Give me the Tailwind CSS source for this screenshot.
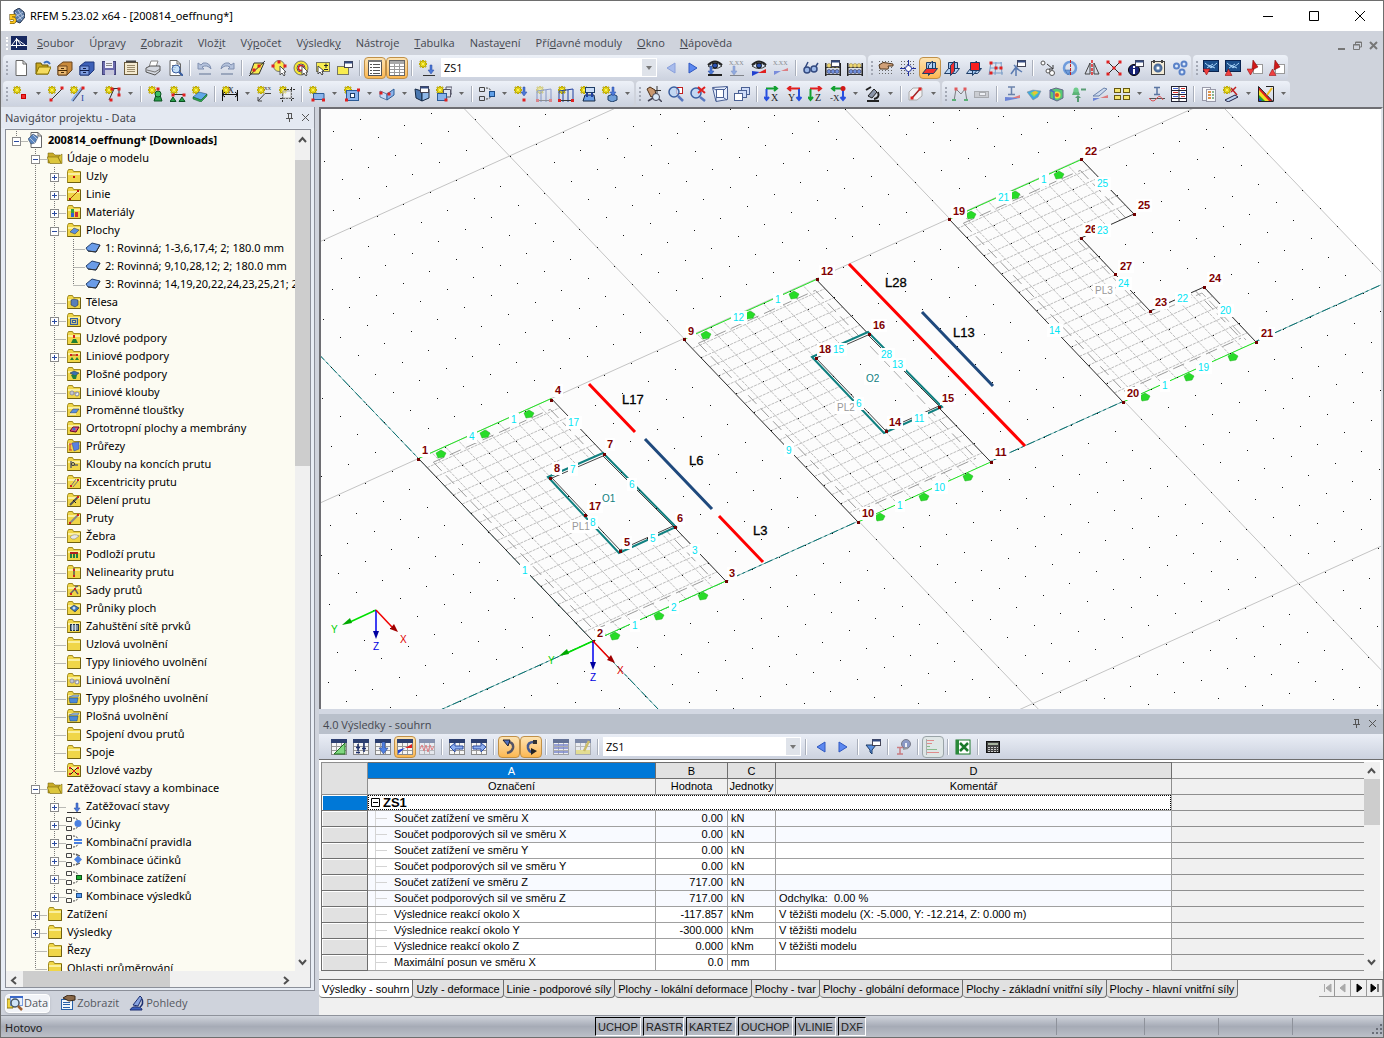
<!DOCTYPE html>
<html lang='cs'>

<head>
    <meta charset='UTF-8'>
    <meta name='viewport' content='width=device-width, initial-scale=1.0'>
    <title>RFEM 5.23.02 x64 - [200814_oeffnung*]</title>
    <script src='https://cdn.jsdelivr.net/npm/@tailwindcss/browser@4'></script>
</head>

<body class="h-screen overflow-hidden flex flex-col border border-[#6e6e6e] bg-[#cfd3dc] font-['Open_Sans','Noto_Sans',sans-serif] text-[11px] leading-4 text-black">

    <!-- title bar -->
    <header class='h-[30px] shrink-0 bg-white flex items-center pl-2'>
        <svg class='w-4 h-4 mr-[5px]' viewBox='0 0 16 16'>
            <path d='M5 3L10 0L15 4L16 9L11 15L6 13Z' fill='#5b7ba8' stroke='#26364f' />
            <path d='M6 4l7 8M9 2l5 7M6 9l8-5M8 12l7-5' stroke='#b7c8e0' />
            <path d='M6.500 7.500H2V10.500Q6 9.500 6 12.500Q6 15 1 14.500' fill='none' stroke='#5a4500' stroke-width='3' />
            <path d='M6.500 7.500H2V10.500Q6 9.500 6 12.500Q6 15 1 14.500' fill='none' stroke='#ffc820' stroke-width='2' />
        </svg>
        <h1 class="flex-1 font-['Noto_Sans','Open_Sans',sans-serif]">RFEM 5.23.02 x64 - [200814_oeffnung*]</h1>
        <div class='flex'>
            <button aria-label='Minimalizovat' class='w-[46px] h-[29px] grid place-items-center'><svg class='w-[10px] h-[10px]' viewBox='0 0 10 10'><path d='M0 5.500H10' stroke='#000' /></svg></button>
            <button aria-label='Maximalizovat' class='w-[46px] h-[29px] grid place-items-center'><svg class='w-[10px] h-[10px]' viewBox='0 0 10 10'><path d='M.5.5H9.500V9.500H.5Z' fill='none' stroke='#000' /></svg></button>
            <button aria-label='Zavřít' class='w-[46px] h-[29px] grid place-items-center'><svg class='w-[10px] h-[10px]' viewBox='0 0 10 10'><path d='M0 0L10 10M10 0L0 10' stroke='#000' /></svg></button>
        </div>
    </header>

    <!-- menu -->
    <nav class='h-6 shrink-0 flex items-center pl-[5px] text-[#44474f]'>
        <span class='h-[13px] border-l-2 border-dotted border-white mr-[3px]'></span>
        <svg class='w-4 h-[14px] mr-[10px]' viewBox='0 0 16 14'>
            <path d='M0 0H16V14H0Z' fill='#172860' />
            <path d='M0 9.500H16M5.500 2V12M5.500 3L1 9M5.500 3L14 9M5.500 3L10 9' stroke='#fff' fill='none' />
        </svg>
        <div id='menu' class='flex flex-1 gap-[15px]'></div>
        <div class='flex gap-[7px] pr-[5px] pt-1'>
            <svg class='w-[9px] h-[9px]' viewBox='0 0 9 9'><path d='M1 8H8' stroke='#777' stroke-width='2' /></svg>
            <svg class='w-[9px] h-[9px]' viewBox='0 0 9 9'><path d='M.5 3.500H6.500V8.500H.5ZM2.500 3V1H8.500V6H7M.5 4H6.500M3 1.500H8' stroke='#777' fill='none' /></svg>
            <svg class='w-[9px] h-[9px]' viewBox='0 0 9 9'><path d='M1 1L8 8M8 1L1 8' stroke='#777' stroke-width='2' /></svg>
        </div>
    </nav>

    <!-- toolbars -->
    <div id='bar1' class='h-[26px] shrink-0 flex pl-[2px] gap-[2px]'></div>
    <div id='bar2' class='h-[26px] shrink-0 flex pl-[2px] gap-[2px]'></div>

    <main class='flex-1 min-h-0 flex'>

        <!-- navigator -->
        <aside class='w-[314px] shrink-0 flex flex-col'>
            <section class='flex-1 min-h-0 flex flex-col bg-[#e8edf5] border-b border-r border-[#8b8f99]'>
                <div class='h-[21px] shrink-0 flex items-center pl-1 bg-[#e4e9f2] text-[#44474f]'>
                    <h2 class="flex-1 font-['Noto_Sans','Open_Sans',sans-serif]">Navigátor projektu - Data</h2>
                    <svg class='w-4 h-4' viewBox='0 0 16 16'><path d='M5 3.500H10M6.500 3V8M9.500 3V8M4 8.500H11M7.500 9V12' stroke='#555' fill='none' /></svg>
                    <svg class='w-4 h-4' viewBox='0 0 16 16'><path d='M4 4L11 11M11 4L4 11' stroke='#555' /></svg>
                </div>
                <div class='flex-1 min-h-0 flex flex-col mt-px ml-1 mr-[3px] mb-[2px] border border-[#8b8f99] bg-[#fcfbf2]'>
                    <div class='flex-1 min-h-0 flex'>
                        <div id='tree' class="flex-1 min-w-0 overflow-hidden pt-px font-['Noto_Sans','Open_Sans',sans-serif]"></div>
                        <div class='w-[15px] bg-[#f0f0f0] flex flex-col'>
                            <svg class='w-[15px] h-[30px] shrink-0' viewBox='0 0 15 30'><path d='M4 12L7.500 8L11 12' fill='none' stroke='#505050' stroke-width='2' /></svg>
                            <div class='h-[306px] bg-[#cdcdcd]'></div>
                            <span class='flex-1'></span>
                            <svg class='w-[15px] h-[17px] shrink-0' viewBox='0 0 15 17'><path d='M4 6L7.500 10L11 6' fill='none' stroke='#505050' stroke-width='2' /></svg>
                        </div>
                    </div>
                    <div class='h-4 shrink-0 bg-[#f0f0f0] flex'>
                        <svg class='w-[17px] h-4' viewBox='0 0 17 16'><path d='M10 6L6 9.500L10 13' fill='none' stroke='#505050' stroke-width='2' /></svg>
                        <div class='w-[147px] bg-[#cdcdcd]'></div>
                        <span class='flex-1'></span>
                        <svg class='w-[32px] h-4' viewBox='0 0 32 16'><path d='M6 6L10 9.500L6 13' fill='none' stroke='#505050' stroke-width='2' /></svg>
                    </div>
                </div>
            </section>
            <div class='h-6 shrink-0 flex items-center pl-1 gap-[10px] text-[#55585f]'>
                <button class='h-[19px] flex items-center gap-px px-px bg-[#f2f4f8] rounded border border-white shadow-sm' data-icon='navdata'>Data</button>
                <button class='flex items-center gap-px' data-icon='navshow'>Zobrazit</button>
                <button class='flex items-center gap-px' data-icon='navview'>Pohledy</button>
            </div>
        </aside>

        <div class='flex-1 min-w-0 flex flex-col pl-[4px]'>

            <!-- model view -->
            <div class='flex-1 min-h-0 border-t-2 border-l-2 border-[#6e6e73] border-r-2 border-r-[#dfe3ea] bg-[#fcfcfc]'>
                <svg id='model' class='block w-full h-full'></svg>
            </div>

            <!-- results -->
            <section class='shrink-0 h-[306px] flex flex-col border-t-[5px] border-[#d3d8e3] bg-[#f0f0f0]'>
                <div class='h-5 shrink-0 flex items-center pl-1 pr-[2px] bg-[#b9c0cb] text-[#44474f]'>
                    <h2 class='flex-1 pt-px'>4.0 Výsledky - souhrn</h2>
                    <svg class='w-4 h-4' viewBox='0 0 16 16'><path d='M5 3.500H10M6.500 3V8M9.500 3V8M4 8.500H11M7.500 9V12' stroke='#555' fill='none' /></svg>
                    <svg class='w-4 h-4' viewBox='0 0 16 16'><path d='M4 4L11 11M11 4L4 11' stroke='#555' /></svg>
                </div>
                <div id='bar3' class='h-[26px] shrink-0 flex items-center pl-[9px] bg-linear-to-b from-[#eaeef6] to-[#ccd2df] border-b border-[#6e6e6e]'></div>
                <div class='flex bg-white pt-[2px] pl-[2px] pr-[3px]'>
                    <table class='flex-1 table-fixed border-collapse w-full font-["Liberation_Sans",Arial,sans-serif]'>
                        <colgroup>
                            <col class='w-[46px]'><col class='w-[288px]'><col class='w-[72px]'><col class='w-[48px]'><col class='w-[396px]'><col>
                        </colgroup>
                        <thead id='thead'></thead>
                        <tbody id='rows'></tbody>
                    </table>
                    <div class='w-4 shrink-0 bg-[#f0f0f0] flex flex-col'>
                        <svg class='w-4 h-[17px]' viewBox='0 0 16 17'><path d='M4 11L7.500 7L11 11' fill='none' stroke='#505050' stroke-width='2' /></svg>
                        <div class='h-[46px] bg-[#cdcdcd]'></div>
                        <span class='flex-1'></span>
                        <svg class='w-4 h-[17px]' viewBox='0 0 16 17'><path d='M4 6L7.500 10L11 6' fill='none' stroke='#505050' stroke-width='2' /></svg>
                    </div>
                </div>
                <div class='mt-[8px] flex items-start border-t border-[#6e6e6e] font-["Liberation_Sans",Arial,sans-serif]'>
                    <div id='tabs' class='flex flex-1'></div>
                    <div id='pager' class='flex'></div>
                </div>
            </section>
        </div>
    </main>

    <!-- status bar -->
    <footer class='h-[22px] shrink-0 flex items-center pl-1 bg-linear-to-b from-[#d0d4dc] via-[#a6abb6] to-[#bcc0c8] border-t border-[#8e929b] text-[#222]'>
        <span class='w-[590px] pt-[2px] font-["Noto_Sans",sans-serif]'>Hotovo</span>
        <div id='modes' class='flex gap-[2px] font-["Liberation_Sans",Arial,sans-serif]'></div>
        <div class='flex-1 flex justify-end self-stretch py-[2px]'>
            <span class='w-[88px] border-l border-[#8e929b]'></span>
            <span class='w-[74px] border-l border-[#8e929b]'></span>
            <span class='w-[74px] border-l border-[#8e929b]'></span>
            <span class='w-[91px] border-l border-[#8e929b] flex justify-end items-end'>
                <svg class='w-3 h-3' viewBox='0 0 12 12'><path d='M9 1h2v2h-2zM5 5h2v2h-2zM9 5h2v2h-2zM1 9h2v2h-2zM5 9h2v2h-2zM9 9h2v2h-2z' fill='#6a6e78' /></svg>
            </span>
        </div>
    </footer>

    <script>
        const $ = id => document.getElementById(id)

        // ---------- icons (16 x 16) ----------
        const R = (x, y, w, h, f, s = 'none') => `<rect x="${x}" y="${y}" width="${w}" height="${h}" fill="${f}" stroke="${s}"/>`
        const P = (d, f = 'none', s = 'none', w = 1) => `<path d="${d}" fill="${f}" stroke="${s}" stroke-width="${w}"/>`
        const S = (d, s = '#333', w = 1) => P(d, 'none', s, w)
        const C = (x, y, r, f, s = 'none', w = 1) => `<circle cx="${x}" cy="${y}" r="${r}" fill="${f}" stroke="${s}" stroke-width="${w}"/>`
        const T = (x, y, t, f = '#222', n = 7) => `<text x="${x}" y="${y}" font-size="${n}" fill="${f}" font-family="Liberation Serif, serif">${t}</text>`
        const dash = (s, d) => s.replace('/>', ` stroke-dasharray="${d}"/>`)
        const dot = (x, y) => R(x - 1.5, y - 1.5, 3, 3, '#e02020')
        const star = S('M4 0V8M0 4H8M1 1L7 7M7 1L1 7', '#a89400', 2) + S('M4 .5V7.500M.5 4H7.500M1.500 1.500L6.500 6.500M6.500 1.500L1.500 6.500', '#fbec10', 1) + C(4, 4, 1.500, '#fdf250')
        const cursor = P('M9 6V15L11 13L13 16L14 15L13 12H15Z', '#fff', '#555')
        const win = (x, y) => R(x, y, 8, 6, '#fff', '#445') + R(x, y, 8, 2, '#334a80')
        const down = (x, y) => P(`M${x} ${y}h2v5h2l-3 4l-3-4h2z`, '#4a78d8', '#2a4aa0', .5)
        const eye = S('M1 5Q8 -2 15 5', '#222', 2) + P('M1 6Q8 0 15 6Q8 11 1 6', '#dce8f8', '#333') + C(8, 5.500, 2.500, '#2a50b0', '#111')
        const mesh = dash(S('M1 1.500H16M1 4.500H16M1 7.500H16M1 10.500H16M1 13.500H16', '#666'), '1 2')
        const table = R(.5, .5, 15, 15, '#f5f5f5', '#8a8a8a') + R(0, 0, 16, 4, '#2c3f70') + S('M1 7.500H15M1 11.500H15M5.500 4V15M10.500 4V15', '#999')
        const combo = S('M.5 1.500H5.500V5.500H.5ZM.5 10.500H5.500V14.500H.5Z', '#444') + dash(S('M7 2Q11 2 12 5M7 13Q11 13 12 10', '#444'), '2 1')
        const abacus = R(0, 3, 1.500, 13, '#222') + R(14.500, 3, 1.500, 13, '#222') + S('M1 7.500H15M1 14.500H15') + C(4, 5.500, 2, '#f0d870', '#887740', .5) + C(8, 5.500, 2, '#f0d870', '#887740', .5) + C(12, 5.500, 2, '#f0d870', '#887740', .5) + C(4, 11.500, 2, '#7090e0', '#224', .5) + C(8, 11.500, 2, '#7090e0', '#224', .5) + C(12, 11.500, 2, '#7090e0', '#224', .5)
        const square = f => P('M4.500 2.500H13.500V10.500H4.500Z', f, '#1d3c66')
        const flat = f => P('M.5 13.500L4.500 8.500H15.500L11.500 13.500Z', f, '#1d3c66')
        const upright = f => P('M6.500 5.500L10.500 1V11L6.500 15.500Z', f, '#1d3c66')
        const sheet = P('M3 .5H10L13.500 4V15.500H3Z', '#fff', '#666') + S('M10 .5V4H13.500', '#666')
        const screen = R(.5, .5, 15, 11, '#1c508c', '#0a2450') + S('M2 3L8 8L14 3M5 5L12 8M4 8L10 4', '#a8d4f8')
        const folder = P('M1.500 3.500L2.500 1.500H6.500L7.500 3.500H14.500V14.500H1.500Z', '#f0d648', '#a08a20') + P('M2 5H14V7H2Z', '#faf0a0') + S('M1.500 14.500H14.500V4', '#6f6010')
        const frame = S('M1 16V5L15 3V16M5 5V16M10 4V16', '#2040a0') + S('M0 14.500H16') + dot(1.500, 14.500) + dot(14.500, 14.500)
        const axes = (a, b, t, x, y) => S(a, '#12a030', 2) + S(b, '#2850e0', 2) + T(x, y, t, '#222', 10)
        const icons = {
            new: sheet,
            open: P('M1 14V3H6L7 5H13V14Z', '#c9a820', '#6b5600') + P('M1 14L4 7H16L13 14Z', '#f5dc60', '#8b7600') + S('M9 3Q12 0 15 4', '#3c70c0', 2),
            drawerA: P('M1 6L6 2H15V10L10 15H1Z', '#c98a3c', '#6a441c') + P('M1 6H10V15H1Z', '#eab870', '#6a441c') + S('M1 10.500H10M4 8.500H7M4 12.500H7', '#4a2c08'),
            drawerB: P('M1 6L6 2H15V10L10 15H1Z', '#3c60b8', '#20387c') + P('M1 6H10V15H1Z', '#7f9ee0', '#20387c') + S('M1 10.500H10M4 8.500H7M4 12.500H7', '#101c48'),
            save: R(1.500, 1.500, 13, 13, '#6a6aac', '#44447c') + R(4, 1, 8, 7, '#f0f0f8') + R(4, 10, 9, 5, '#c8c8dc') + S('M5 3.500H11M5 5.500H11', '#888'),
            clip: R(1.500, 2.500, 13, 12, '#f4ead0', '#6a5a3a') + S('M4 5.500H12M4 7.500H12M4 9.500H12M4 11.500H12', '#9a8a6a') + S('M3 1.500H13', '#444', 2),
            print: P('M4 7L6 1H13L11 7', '#fff', '#888') + P('M1 8L5 6H15V11L10 15L1 12Z', '#d4d8e0', '#555') + S('M2 10L10 12L15 9', '#777'),
            preview: sheet + S('M5 5.500H11M5 7.500H9M5 9.500H8', '#777') + C(9, 9, 4, '#b8d8f8cc', '#3a5ea0') + S('M12 12L16 16', '#3a5ea0', 2),
            undo: P('M1 3V9H7L5 7Q10 4 14 9Q13 2 6 3L4 5Z', '#b4c2dc', '#8090b0') + S('M2 14H14', '#9aa6bc', 2),
            redo: P('M15 3V9H9L11 7Q6 4 2 9Q3 2 10 3L12 5Z', '#b4c2dc', '#8090b0') + S('M2 14H14', '#9aa6bc', 2),
            selq: P('M1 14L5 3H15L10 14Z', '#f8ec50', '#333') + S('M0 16L16 1', '#333') + dot(5, 10) + dot(10, 6),
            sele: C(8, 6, 5.500, '#f8ec50', '#777') + dot(8, 2) + dot(2, 6) + dot(14, 6) + cursor,
            ring: C(8, 8, 7, '#f8e830', '#776') + C(8, 8, 4, '#fff', '#555', 1) + C(8, 8, 2.500, 'none', '#d02020', 1.500) + cursor,
            selw: R(1.500, 2.500, 13, 9, '#f8ec50', '#776') + S('M9 5.500H13M11 3.500V8M9 9.500H13', '#222') + P('M3 6V14L5 12L7 15L8 14L7 11H9Z', '#fff', '#444'),
            wins: R(.5, 6.500, 11, 8, '#f8ec50', '#776') + win(7.500, 1.500),
            navi: R(1.500, .5, 13, 15, '#fff', '#555') + S('M3 4.500H5M6 4.500H13M3 7.500H5M6 7.500H13M3 10.500H5M6 10.500H13M3 13.500H5M6 13.500H13', '#555') + R(1, 0, 14, 2, '#777'),
            tabl: R(.5, .5, 15, 15, '#fff', '#666') + R(1, 1, 14, 3, '#a8a8a8') + S('M1 6.500H15M1 9.500H15M1 12.500H15M5.500 4V15M10.500 4V15', '#999'),
            load: star + down(11, 5) + S('M4 15.500H16'),
            left: P('M12 3V13L4 8Z', '#a8bcec', '#8aa0dc'),
            right: P('M4 3V13L12 8Z', '#5c88f0', '#3058c0'),
            left2: P('M12 3V13L4 8Z', '#5c88f0', '#3058c0'),
            eyeload: eye + down(3, 6) + S('M1 15H15', '#222', 2),
            xxload: '<g opacity=".5">' + T(0, 5, 'X.XX', '#222', 6) + down(4, 6) + S('M1 15.500H15') + '</g>',
            eyeres: eye + P('M1 16V11L9 12Z', '#2040d0') + P('M7 13L15 9V13Z', '#e02020'),
            xxres: '<g opacity=".5">' + T(0, 5, 'X.XX', '#222', 6) + P('M1 15V11L8 11Z', '#2040d0') + P('M8 11L15 8V11Z', '#e02020') + '</g>',
            glasses: C(4, 10, 3, '#9cb8e8', '#334a80', 1.500) + C(11, 9, 3, '#9cb8e8', '#334a80', 1.500) + S('M2 8L5 2M13 6L15 3', '#334a80', 1.500),
            abwin: abacus + win(6.500, .5),
            abacus,
            hand: mesh + P('M1 5Q5 1 9 3L15 4V6H10Q12 10 7 9L2 9Z', '#d0a078', '#503820'),
            snap: mesh + S('M8.500 0V16M0 8.500H16', '#2030a0') + C(8.500, 8.500, 3, '#fff', '#2030a0'),
            plxy: square('#9cc4f0') + upright('#b8d4f4') + flat('#f03030'),
            plyz: square('#9cc4f0') + flat('#b8d4f4') + upright('#f03030'),
            plxz: flat('#b8d4f4') + upright('#9cc4f0') + square('#f82020'),
            gridp: S('M3 2L1 15M8 2L7 15M13 2L14 15M3 3H14M2 8H14M1 13H15', '#7a9ec8') + dot(3, 3) + dot(8, 8) + dot(13, 8) + dot(3, 13),
            uaxes: S('M6 16V7L1 14M6 8L12 12M4 5L8 9', '#5a7ab0', 1.500) + win(7.500, .5),
            copy: C(3, 3, 2, '#fff', '#555') + C(12, 13, 2.500, '#fff', '#555') + C(8, 11, 2, '#fff', '#555') + S('M7 4L13 9M13 5V9H9', '#333'),
            rotate: C(8, 8, 6, 'none', '#6f9cdc', 2.500) + P('M3 10L9 10L6 15Z', '#6f9cdc', '#34609c', .5) + dash(S('M8.500 0V16', '#c02020'), '3 1'),
            mirror: S('M6 3V14H1ZM10 3V14H15Z', '#444') + dash(S('M8 0V16', '#e02020', 1.500), '3 1'),
            cross: S('M2 2L14 14M14 2L2 14', '#222') + dot(2, 2) + dot(14, 2) + dot(2, 14) + dot(14, 14) + dot(8, 8),
            info: C(6, 10, 5.500, '#182478', '#000') + R(5, 9, 2, 5, '#fff') + R(5, 6, 2, 2, '#fff') + win(7.500, .5),
            clipgear: R(1.500, 1.500, 13, 13, '#f4ecd8', '#444') + C(8, 8, 3.500, '#7090b8', '#4a6a98', 2) + C(8, 8, 1.500, '#fff') + S('M4 0V3M12 0V3', '#444', 2),
            gears: C(4.500, 6, 2.500, '#e0ecfc', '#5a82c8', 2) + C(12, 4, 2.500, '#e0ecfc', '#5a82c8', 2) + C(10, 12, 2.500, '#e0ecfc', '#5a82c8', 2),
            scr1: screen + P('M0 9H7L3.500 15Z', '#f04040', '#800', .5),
            scr2: screen + P('M0 15.500H7L3.500 9Z', '#f04040', '#800', .5),
            red1: R(6.500, 4.500, 9, 9, '#fff', '#999') + P('M6 0L11 7L5 10Z', '#d01818', '#700', .5) + P('M0 9H7L3.500 15Z', '#f04040', '#800', .5),
            red2: R(6.500, 4.500, 9, 9, '#fff', '#999') + P('M6 0L11 7L5 10Z', '#d01818', '#700', .5) + P('M0 15.500H7L3.500 9Z', '#f04040', '#800', .5),
            // second row
            node: star + R(8.500, 8.500, 4, 4, '#f03030', '#c00'),
            line: star + S('M3 14L14 3') + dot(3, 14) + dot(14, 2),
            member: star + S('M2 15L12 2', '#8ab0e8', 3) + S('M3 15L13 2', '#445') + dot(13, 2) + T(11, 15, 'I', '#2040a0', 9),
            poly: star + S('M7 2.500H14V9M9 3L4 14', '#333') + dot(7, 3) + dot(14, 3) + dot(14, 9) + dot(6, 14),
            sup: star + P('M6 15L8 9H12L14 15Z', '#28a048', '#0a5020') + C(10, 8, 3, '#3cc060', '#0a5020') + dot(10, 3),
            sups: star + S('M4 8.500H15') + dot(3, 9) + dot(14, 9) + P('M0 15.500L3 11L6 15.500ZM9 15.500L12 11L15 15.500Z', '#28a048', '#0a5020'),
            supa: star + P('M1 11L7 6L15 8L9 14Z', '#60a8e8', '#1d3c66', .5) + P('M1 11L9 14L15 8V10L9 16L1 13Z', '#30a850', '#0a5020', .5),
            dim: star + S('M0 8.500H16M.5 4V15M15.500 4V15M3 6L0 8.500L3 11M13 6L16 8.500L13 11', '#111') + T(6, 7, 'X', '#111', 8),
            note: star + T(7, 4, 'XX', '#333', 5) + S('M14 7.500H8L1 15M1 11V15H5', '#444'),
            guides: star + dash(S('M3.500 8V16M12.500 1V16M1 12.500H16M5 3.500H16', '#333'), '2 1') + R(4, 5, 8, 7, '#fff8', '#aaa'),
            surf: star + P('M4.500 7.500H15V13.500H4.500Z', '#8ab4ec', '#2d5c96') + dot(4, 14) + dot(14.500, 14),
            opening: star + R(2.500, 4.500, 12, 10, '#8ab4ec', '#2d5c96') + R(6.500, 7.500, 4, 4, '#fff', '#1d3c66') + dot(2.500, 14) + dot(14.500, 4),
            intersect: P('M1 5L8 8V14L1 11Z', '#c8dcf8', '#5d7ca6') + P('M8 8L15 3V9L8 14Z', '#8ab4ec', '#2d5c96') + dot(2, 7) + dot(10, 8),
            solid: P('M1 3L8 5V15L2 12Z', '#4a78b0', '#142844') + P('M8 5L15 3V12L8 15Z', '#8fb8e8', '#142844') + win(6.500, .5),
            solids: star + R(1.500, 7.500, 9, 7, '#8ab4ec', '#2d5c96') + S('M7.500 7V3.500H14.500V11H11M10 3V1H16V8H15', '#556') + dot(10, 14),
            comb: combo + R(10.500, 5.500, 5, 5, '#60a0e8', '#1d4c86'),
            nload: star + down(9, 1) + dot(10, 14),
            mload0: '<g opacity=".45">' + star + frame + '</g>',
            mload: star + frame,
            aload: star + R(5.500, 1.500, 9, 5, '#c8dcf8', '#1d3c66') + P('M3 15L5 9H14L15 15Z', '#6ca0e8', '#142844') + S('M7 7V11M12 7V11', '#2040a0', 2),
            bload: star + P('M6 10L11 8L15 10V14L10 16L6 14Z', '#6f9ed8', '#1d3c66') + down(10, 1),
            pan: S('M11 0V9M7 4.500H15', '#333') + P('M1 3L4 1L9 4L10 9L5 11Z', '#c89870', '#4a3018') + C(10, 11, 3.500, '#d8e8f8', '#445') + S('M13 13L16 16M2 15L7 12', '#445', 1.500),
            zoomw: R(8.500, 1.500, 6, 6, '#fff', '#c02020') + C(6, 6, 5, '#bcd4f4cc', '#3a5ea0', 1.500) + S('M10 10L15 15', '#5878c0', 2.500),
            zoomx: C(6, 7, 5, '#bcd4f4cc', '#3a5ea0', 1.500) + S('M10 11L15 15', '#5878c0', 2.500) + S('M8 1L15 7M15 1L8 7', '#e02020', 2),
            cubew: P('M.5 1.500L15.500 .5V13.500L4 15.500Z', '#e4ecfc', '#4a6094') + R(4.500, 3.500, 7, 8, '#fff', '#4a6094') + S('M1 2L4 4M15 1L12 4M4 15L4 12M15 14L12 12', '#4a6094'),
            cubes: R(7.500, 1.500, 8, 7, '#cfdcf8', '#4a6094') + R(4.500, 4.500, 8, 7, '#cfdcf8', '#4a6094') + R(.5, 7.500, 8, 7, '#fff', '#4a6094'),
            vx: axes('M2 2.500H13M10 0L13 2.500L10 5', 'M2.500 3V14M0 11L2.500 14L5 11', 'X', 7, 15),
            vy: S('M14 2.500H2M5 0L2 2.500L5 5', '#e02020', 2) + S('M13 3V14M10.500 11L13 14L15.500 11', '#2850e0', 2) + T(2, 15, 'Y', '#222', 10),
            vz: S('M2 2.500H13M10 0L13 2.500L10 5', '#e02020', 2) + S('M2.500 3V14M0 11L2.500 14L5 11', '#12a030', 2) + T(7, 15, 'Z', '#222', 10),
            vmx: S('M12 2.500H2M5 0L2 2.500L5 5', '#12a030', 2) + S('M13 3V14M10.500 11L13 14L15.500 11', '#2850e0', 2) + C(13, 2.500, 2.500, '#d01818') + T(0, 15, '-X', '#222', 9),
            micro: P('M3 10L9 3L12 6L7 12Z', '#8a94a8', '#222') + S('M2 15H14M9 13Q15 12 13 6M1 4L6 1', '#222', 2),
            section: P('M1 6L5 2H14V10L9 14H1Z', '#f2f2f4', '#aaa') + S('M4 12L12 3', '#a02020', 1.500) + dot(12, 3) + dot(4, 12),
            portal: '<g opacity=".7">' + S('M2 15L4 3L9 8L13 3L15 15', '#555') + dot(4, 3) + dot(13, 3) + P('M0 15h4v-2h-4zM12 15h4v-2h-4z', '#28a048') + '</g>',
            tag: '<g opacity=".5">' + R(.5, 5.500, 14, 6, '#bbb', '#777') + R(5.500, 6.500, 6, 3, '#fff', '#777') + '</g>',
            resI: '<g opacity=".7">' + S('M4 1H11M7.500 1V8M4 8.500H11', '#3a5a90', 1.500) + P('M1 15V11L16 12Z', '#4060d0') + P('M8 12L16 9V12Z', '#e05050') + '</g>',
            iso: P('M1 6L7 4L15 5L12 11L7 14Z', '#40a8e0', '#888', .5) + P('M4 7L9 5L13 6L8 11Z', '#80e060') + P('M6 6L10 5L12 7L8 9Z', '#f0c030'),
            isocube: P('M2 4L8 2L15 4V12L9 15L2 12Z', '#58c878', '#668') + C(9, 9, 3.500, '#f0e040') + C(9, 9, 2, '#e05030') + S('M2 4L6 6V14', '#4070c0', 1.500),
            supres: '<g opacity=".7">' + P('M2 9L4 4H8L10 9Z', '#28a048') + C(6, 4, 2.500, '#3cc060') + S('M16 3.500H11M8 11V16', '#208040', 2) + P('M5 12L8 9L11 12Z', '#208040') + '</g>',
            defl: '<g opacity=".7">' + P('M1 10L12 2L15 3L7 10Z', '#c8d8f0', '#3a5a90') + P('M1 15V12H8Z', '#4060d0') + P('M8 12L16 9V12Z', '#e05050') + '</g>',
            boxes: R(.5, 2.500, 6, 4, '#f4e670', '#665810') + R(9.500, 2.500, 6, 4, '#f4e670', '#665810') + R(.5, 9.500, 6, 4, '#f4e670', '#665810') + R(9.500, 9.500, 6, 4, '#f4e670', '#665810'),
            curve: '<g opacity=".8">' + S('M5 1.500H11M8 1V8M5 8.500H11', '#3a5a90', 1.500) + S('M0 12.500H16', '#333') + S('M0 12Q4 18 8 12Q11 8 14 14', '#e03030') + '</g>',
            tables: R(.5, .5, 15, 15, '#fff', '#223') + S('M1 4.500H15M1 8.500H15M1 12.500H15M8 1V15', '#223', 1) + S('M2 2.500H7M10 6.500H14M2 10.500H7', '#4060d0') + S('M10 2.500H14M2 6.500H7M10 10.500H14', '#e03030'),
            report: '<g opacity=".8">' + R(1.500, 1.500, 8, 13, '#fff', '#889') + R(5.500, 3.500, 9, 12, '#fff', '#889') + S('M7 6H10M7 9H10M7 12H10', '#e08020', 2) + S('M11 6H13M11 9H13M11 12H13', '#4a9050', 1.500) + '</g>',
            pens: star + S('M8 2L14 9M13 1L8 6', '#c02020', 1.500) + P('M2 14L12 9L15 11L5 16Z', '#b8d0f0', '#224'),
            palette: P('M.5 .5V15.500H15Z', '#e02020', '#222') + P('M1 4V15H11Z', '#f4e020') + P('M1 9V15H7Z', '#20a030') + P('M1 12V15H4Z', '#2040d0') + S('M9 9L14 2', '#f0c020', 2) + S('M8 .5H15.500V15.500', '#222', 1),
            // results toolbar
            t1: table + P('M3 15H14V4Z', '#80d880', '#207020'),
            t2: table + S('M5 5V12M3 8.500H7M11 4V13M9 9.500H13M3 13.500H7', '#1c2f6c', 1.500),
            t3: table + P('M7 3h3v6h3l-4.500 6l-4.500-6h3z', '#5080e0', '#203a80', .5),
            t4: table + P('M1 15V11L8 9Z', '#2040d0') + P('M8 9L15 5V9Z', '#e02020'),
            t5: '<g opacity=".5">' + table + S('M1 10L3 6L5 12L7 6L9 13L11 6L13 11L15 7', '#e02020') + '</g>',
            t6: table + P('M1 8L6 4V7H14V10H6V13Z', '#90b0f0', '#2a4aa0'),
            t7: table + P('M15 8L10 4V7H2V10H10V13Z', '#90b0f0', '#2a4aa0'),
            c1: S('M6 3Q13 3 12 9Q11 13 6 14', '#556', 2.500) + P('M2 1L9 1L7 7Z', '#5070c0', '#223'),
            c2: S('M11 3Q4 3 5 9Q6 13 9 13', '#445a90', 2.500) + P('M8 16L14 12L8 9Z', '#222') + R(10, 1, 4, 4, '#333'),
            t8: '<g opacity=".7">' + table + S('M1 6H15M1 9H15M1 13H15', '#5060c0', 1.500) + '</g>',
            t9: '<g opacity=".55">' + table + R(1, 11, 14, 4, '#f0e050') + S('M14 2L9 12', '#c0a000', 2.500) + '</g>',
            filter: P('M1 6H11L7 11V15L5 13V11Z', '#5a90e0', '#1d3c66') + win(7.500, .5),
            infoi: '<g opacity=".5">' + C(11, 5, 4.500, '#3a52a0', '#112') + R(10, 4, 2, 4, '#fff') + S('M2 8.500H8M5 8V15M2 15H8', '#c02020', 1.500) + S('M8 10L13 9', '#555', 2) + '</g>',
            bars: '<g opacity=".6">' + S('M1.500 0V16', '#888') + S('M2 1.500H9M2 4.500H7', '#e05050') + S('M2 7.500H5M2 10.500H12', '#50a050') + S('M2 13.500H14', '#e05050') + '</g>',
            xls: R(1, 1, 14, 14, '#fff', '#1a7a2a') + R(1, 1, 3, 14, '#2a8a3a') + S('M5 4L13 12M13 4L5 12', '#1a7a2a', 2.500),
            calc: R(1.500, 2.500, 13, 11, '#444', '#111') + R(3, 4, 10, 2, '#a8b4a0') + dash(S('M3 8.500H13M3 10.500H13M3 12.500H13', '#ccc'), '2 1'),
            navdata: P('M0 4H6V13H0Z', '#f0d648', '#8a7410') + R(3.500, 1.500, 12, 9, '#e8f0fc', '#7aa0e0') + R(3, 1, 13, 2, '#3a68c8') + C(8, 8, 4, '#d0e4f8', '#456', 1.500) + S('M11 11L15 15', '#a06030', 2.500),
            navshow: R(1.500, 4.500, 11, 10, '#f0f6fc', '#2860a8') + S('M3 7.500H10M3 9.500H10M3 12.500H10', '#2860a8') + P('M3 3L8 0L15 1V5L9 6Z', '#8a6848', '#3a2818'),
            navview: P('M4 10L11 1L13 3L9 11Z', '#88a4e0', '#1d2f70') + P('M1 15Q3 11 8 12Q13 12 13 15Z', '#3c60c0', '#1d2f70') + S('M13 4Q15 9 11 12', '#1d2f70', 1.500),
            // tree
            doc: sheet + P('M0 7L5 2L10 5L7 11L3 12Z', '#5b86c0', '#26364f', .5) + S('M2 6L7 11M5 3L9 7', '#b7c8e0'),
            opened: P('M1 13V3H6L8 5H13V13Z', '#c8ac28', '#6b5600', .5) + P('M3 13.500L0 7H11L15 4V13.500Z', '#dcc63c', '#6b5600', .5) + S('M11 7L14 13', '#8b7610'),
            folder,
            quad: P('M1 8L7 3L15 5L11 12L3 11Z', '#6a9ce8', '#24406c') + S('M3 11L11 12L15 5', '#333'),
            lc: S('M1 14.500H15', '#333', 1) + down(10, 5),
            k1: combo + C(12, 7.500, 3.500, '#4a80e0'),
            k2: combo + S('M8 6H16M8 9H16', '#4a80e0', 2),
            k3: combo + P('M12 3.500L16 7.500L12 11.500L8 7.500Z', '#4a80e0') + S('M10 2L14 4M10 13L14 11', '#444'),
            k4: combo + R(10.500, 5.500, 5, 4, '#20b030', '#0a5018'),
            k5: combo + R(10.500, 5.500, 5, 4, '#5a9cf0', '#1d4c86'),
        }
        // folders carrying a small badge
        const badges = {
            uzly: R(7, 8, 2, 2, '#c01010'),
            linie: S('M4 13L12 5', '#a05000') + R(11, 4, 2, 2, '#c01010') + R(3, 12, 2, 2, '#c01010'),
            mat: R(5, 5, 3, 4, '#30a040') + R(5, 9, 3, 4, '#3060d0') + R(9, 8, 3, 5, '#d03030'),
            ploch: P('M4 10L8 6L13 8L9 12Z', '#5a90e0', '#334', .5),
            teles: P('M5 6L8 5L12 6V11L9 13L5 11Z', '#5a80b8', '#223', .5),
            otvor: R(4.500, 6.500, 7, 6, '#c8c080', '#34609c') + R(6.500, 8.500, 3, 2, '#f0e890', '#34609c'),
            uzpod: P('M5 13L7 9H10L12 13Z', '#208030') + R(7, 5, 2, 3, '#d02020'),
            lipod: S('M4 7H12', '#a03000') + R(4, 6, 2, 2, '#d02020') + R(10, 6, 2, 2, '#d02020') + P('M4 12L6 9L8 12ZM9 12L11 9L13 12Z', '#208030'),
            plpod: P('M4 7L8 5L13 7L9 10Z', '#3870b0', '#223', .5) + P('M5 9H11L10 13H7Z', '#208040'),
            klou: C(6, 9, 2, '#e8eef8', '#889') + C(11, 10, 2, '#e8eef8', '#889') + S('M5 9H11', '#99a'),
            tl: P('M4 11L7 7H13L10 11Z', '#5a90e0', '#334', .5) + S('M4 12H10', '#fff'),
            orto: P('M4 11L7 7L13 7L10 12Z', '#e05080', '#603') + C(8, 9, 1.500, '#3870d0'),
            prurez: P('M6 5L13 4V11L8 13Z', '#5a80e0', '#2a4090', .5) + S('M4 6V12M3 6H6M3 12H6', '#d03030'),
            kon: S('M5 5V12M5 9H12', '#666', 1.500) + C(7, 8, 1.500, '#f0e890', '#333'),
            exc: S('M5 12L10 5M7 13L12 7', '#777') + R(11, 5, 2, 2, '#d02020') + R(4, 11, 2, 2, '#d02020'),
            del: S('M4 13L12 5', '#555', 2) + S('M7 8L10 11', '#222') + R(11, 4, 2, 2, '#d02020'),
            prut: S('M4 13L12 5', '#888', 2) + R(11, 4, 2, 2, '#d02020') + R(3, 12, 2, 2, '#d02020'),
            zebra: P('M4 9Q8 5 13 8L9 11H6Z', '#e8e8e8', '#777', .5),
            podl: S('M4 7H12', '#b02020', 2) + S('M5 8V12M8 8V12M11 8V12', '#208040', 2),
            neli: S('M8 4V13', '#555', 1.500) + R(7, 5, 2, 2, '#d02020') + R(7, 11, 2, 2, '#d02020'),
            sady: S('M4 12L9 7L12 12M9 5L12 4', '#666', 1.500) + R(8, 6, 2, 2, '#d02020') + R(4, 11, 2, 2, '#d02020'),
            prun: P('M4 8L8 5L13 8L9 12Z', '#3a70b8', '#123', .5) + C(8, 8, 1.500, '#c8e0f8'),
            zah: R(4.500, 6.500, 8, 6, '#8090a0', '#234') + S('M6.500 6V13M9.500 6V13', '#cde'),
            typ: P('M3 7L8 5H13L12 7Z', '#9cc4f0', '#456', .5) + P('M3 8L12 8L11 13H4Z', '#4a88d8', '#246', .5),
            vaz: S('M4 5L12 13M12 5L4 13', '#222') + R(3, 5, 2, 2, '#e02020') + R(11, 5, 2, 2, '#e02020') + R(3, 11, 2, 2, '#e02020') + R(11, 11, 2, 2, '#e02020') + R(7, 8, 2, 2, '#e02020'),
        }
        for (const b in badges) icons[b] = folder + badges[b]
        const icon = n => `<svg class="w-4 h-4 shrink-0" viewBox="0 0 16 16">${icons[n]}</svg>`

        document.querySelectorAll('[data-icon]').forEach(b => b.insertAdjacentHTML('afterbegin', icon(b.dataset.icon)))

        // ---------- menu ----------
        $('menu').innerHTML = '_Soubor Úpr_avy _Zobrazit Vlož_it Vý_počet Výsledk_y Nástro_je _Tabulka Nasta_vení Pří_davné~moduly _Okno _Nápověda'
            .split(' ').map(m => `<a href="#">${m.replace('~', ' ').replace(/_(.)/, '<u>$1</u>')}</a>`).join('')

        // ---------- toolbars: "|" separator, "v" drop arrow, "*" pressed, "[]" load case ----------
        const select = w => `<span class="relative flex ${w}"><select aria-label="Zatěžovací stav" class="appearance-none w-full h-[19px] bg-white pl-[3px] outline-none"><option>ZS1</option></select>
            <span class="absolute right-px top-px w-[14px] h-[17px] bg-[#dfe3ea] grid place-items-center pointer-events-none"><svg class="w-[6px] h-1" viewBox="0 0 6 4"><path d="M0 0H6L3 4Z" fill="#777"/></svg></span></span>`
        const tool = t => {
            if (t == '|') return '<span class="w-2 h-4 flex justify-center"><i class="w-px bg-[#a9afbb]"></i><i class="w-px bg-white"></i></span>'
            if (t == 'v') return '<button aria-label="Více" class="w-[13px] h-5 grid place-items-center"><svg class="w-[5px] h-[3px]" viewBox="0 0 5 3"><path d="M0 0H5L2.500 3Z" fill="#666"/></svg></button>'
            if (t == '[]') return select('w-[216px] mx-[3px]')
            if (t == '[s]') return select('w-[198px] mx-px')
            if (t[0] == '*') return `<button aria-label="${t.slice(1)}" class="w-[22px] h-[22px] grid place-items-center border border-[#c09048] rounded-sm bg-linear-to-b from-[#fde3b0] to-[#fcb850]">${icon(t.slice(1))}</button>`
            if (t[0] == '+') return `<button aria-label="${t.slice(1)}" class="w-[22px] h-[22px] grid place-items-center border border-[#9aa4a8] rounded-sm bg-[#dfe6e6]">${icon(t.slice(1))}</button>`
            return `<button aria-label="${t}" class="w-[22px] h-[22px] grid place-items-center">${icon(t)}</button>`
        }
        const tools = s => s.split(' ').map(tool).join('')
        const group = s => `<div class="flex items-center pl-[3px] h-[25px] rounded-sm bg-linear-to-b from-[#edf1f8] to-[#ccd2df]"><i class="h-[14px] mr-[2px] border-l-2 border-dotted border-[#a4a9b5]"></i>${tools(s)}</div>`

        $('bar1').innerHTML = [
            'new open drawerA drawerB save clip print preview | undo redo | selq sele ring selw wins | *navi *tabl | load [] left right eyeload xxload eyeres xxres | glasses abwin abacus',
            'hand snap *plxy plyz plxz gridp uaxes | copy rotate mirror cross info clipgear gears',
            'scr1 scr2 red1 red2'].map(group).join('')
        $('bar2').innerHTML = [
            'node v line member v poly v | sup sups supa | dim v note guides | surf v opening v intersect v solid solids v | comb v nload mload0 mload aload bload v',
            'pan zoomw zoomx cubew cubes | vx vy vz vmx v micro v | section v',
            'portal tag | resI iso isocube supres defl boxes v curve tables | report pens v palette v'].map(group).join('')
        $('bar3').innerHTML = tools('t1 t2 t3 *t4 t5 | t6 t7 | *c1 *c2 | t8 t9 | [s] | left2 right | filter | infoi | +bars | xls | calc')

        // ---------- tree: level, expander, icon, text ----------
        const nodes = `0-doc 200814_oeffnung* [Downloads]
1-opened Údaje o modelu
2+uzly Uzly
2+linie Linie
2+mat Materiály
2-ploch Plochy
3.quad 1: Rovinná; 1-3,6,17,4; 2; 180.0 mm
3.quad 2: Rovinná; 9,10,28,12; 2; 180.0 mm
3.quad 3: Rovinná; 14,19,20,22,24,23,25,21; 2
2.teles Tělesa
2+otvor Otvory
2.uzpod Uzlové podpory
2+lipod Liniové podpory
2.plpod Plošné podpory
2.klou Liniové klouby
2.tl Proměnné tloušťky
2.orto Ortotropní plochy a membrány
2.prurez Průřezy
2.kon Klouby na koncích prutu
2.exc Excentricity prutu
2.del Dělení prutu
2.prut Pruty
2.zebra Žebra
2.podl Podloží prutu
2.neli Nelinearity prutu
2.sady Sady prutů
2.prun Průniky ploch
2.zah Zahuštění sítě prvků
2.folder Uzlová uvolnění
2.folder Typy liniového uvolnění
2.klou Liniová uvolnění
2.typ Typy plošného uvolnění
2.typ Plošná uvolnění
2.folder Spojení dvou prutů
2.folder Spoje
2.vaz Uzlové vazby
1-opened Zatěžovací stavy a kombinace
2+lc Zatěžovací stavy
2+k1 Účinky
2+k2 Kombinační pravidla
2+k3 Kombinace účinků
2+k4 Kombinace zatížení
2+k5 Kombinace výsledků
1+folder Zatížení
1+folder Výsledky
1.folder Řezy
1.folder Oblasti průměrování`.split('\n').map(l => {
            const [, lv, ex, ic, tx] = l.match(/^(\d)(.)(\w+) (.*)/)
            return { lv: +lv, ex, ic, tx }
        })
        $('tree').innerHTML = nodes.map((n, i) => {
            const cx = l => 10.5 + 19 * l
            const more = l => { // does a later sibling exist on this level
                for (let k = i + 1; k < nodes.length; k++) { if (nodes[k].lv == l) return true; if (nodes[k].lv < l) return false }
                return false
            }
            let d = ''
            for (let l = 1; l < n.lv; l++) if (more(l)) d += `M${cx(l)} 0V18`
            d += `M${cx(n.lv)} 0V${more(n.lv) ? 18 : 9}M${cx(n.lv)} 10.500H${cx(n.lv) + 12}`
            const box = n.ex == '.' ? '' : `<rect x="${cx(n.lv) - 4}" y="6.500" width="8" height="8" fill="#fff" stroke="#8a8a8a"/><path d="M${cx(n.lv) - 2.500} 10.500h5${n.ex == '+' ? 'm-2.500 -2.500v5' : ''}" stroke="#2a4aa0"/>`
            const w = 22 + 19 * n.lv
            return `<div class="flex items-center h-[18px] whitespace-nowrap"><svg width="${w}" height="18" class="shrink-0"><path d="${d}" stroke="#777" stroke-dasharray="1 1"/>${box}</svg>${icon(n.ic)}<span class="pl-1${i ? '' : ' font-bold'}">${n.tx}</span></div>`
        }).join('')

        // ---------- model view, screen coordinates shifted to the pane ----------
        const U = [132.75, -60], V = [174.5, 182.5], O = [593, 641]
        const at = (o, a, b) => [o[0] + a * U[0] + b * V[0], o[1] + a * U[1] + b * V[1]]
        const seg = (p, q) => `M${p[0].toFixed(1)} ${p[1].toFixed(1)}L${q[0].toFixed(1)} ${q[1].toFixed(1)}`
        let out = P('M1224 108L2084 1008V108Z', '#fff')
        let dots = ''
        for (let i = -40; i <= 30; i++) for (let j = -60; j < 30; j++) {
            const [x, y] = at(O, i / 5, j / 10).map(Math.round)
            if (x > 315 && x < 1400 && y > 105 && y < 715) dots += `M${x} ${y}.500h1`
        }
        let gray = ''
        for (const b of [-2, -1, 1]) gray += seg(at(O, -6, b), at(O, 6, b))
        for (const a of [2, 4, 6]) gray += seg(at(O, a, -6), at(O, a, 4))
        out += S(gray, '#c4c4c4')
        const teal = seg(at(O, -6, 0), at(O, 8, 0)) + seg(at(O, 0, -4), at(O, 0, 3))
        out += S(teal, '#7fb4b4') + dash(S(teal, '#0a7070'), '9 3 3 3')

        const surfaces = [
            { o: [593, 641], shape: '418,459 551,400 604,453 548,477 620,552 675,526 726,581 593,641' },
            { o: [858, 522], shape: '684,339 817,279 868,332 813,357 885,432 941,407 991,462 858,522' },
            { o: [1123, 402], shape: '949,219 1081,159 1134,214 1081,238 1150,311 1204,287 1256,342 1123,402' },
        ]
        surfaces.forEach((s, n) => {
            let m = ''
            for (let i = 0; i <= 10; i++) m += seg(at(s.o, i / 10, 0), at(s.o, i / 10, -1))
            for (let j = 0; j <= 20; j++) m += seg(at(s.o, 0, -j / 20), at(s.o, 1, -j / 20))
            const c = [at(s.o, 0, -1), at(s.o, 1, -1), at(s.o, 1, 0), s.o]
            const inner = [at(s.o, .06, -.96), at(s.o, .94, -.96), at(s.o, .94, -.04), at(s.o, .06, -.04)]
            out += `<clipPath id="s${n}"><polygon points="${s.shape}"/></clipPath><g clip-path="url(#s${n})"><polygon points="${s.shape}" fill="#fcfcfc"/>`
                + dash(S(m, '#bcbcbc'), '3 1')
                + dash(S(seg(inner[0], inner[1]) + seg(inner[0], inner[3]) + seg(inner[3], inner[2]) + seg(inner[1], inner[2]), '#999'), '12 6') + '</g>'
            if (n < 2) out += S(seg(c[0], c[3]) + seg(c[1], c[2]), '#333')
            out += S(seg(c[0], c[1]) + seg(c[3], c[2]), '#20e820', 1)
        })
        out += S('M949 219L1123 402M1081 159L1134 214L1081 238L1150 311L1204 287L1256 342', '#333')
        out += dash(S('M1078 241L1144 310L1151 315L1202 293L1246 340', '#aaa'), '12 5')
        // openings
        for (const o of [['548,477', '603,453', '676,527', '619,553'], ['812,357', '868,332', '942,407', '884,433']]) {
            out += `<polygon points="${o.join(' ')}" fill="#fcfcfc" stroke="#108080" stroke-width="2"/>`
            const q = o.map(p => p.split(',').map(Number))
            out += S(seg([q[0][0] + 4, q[0][1] + 1], [q[3][0] + 1, q[3][1] - 3]) + seg([q[1][0], q[1][1] + 3], [q[2][0] - 3, q[2][1] - 1]) + seg([q[0][0] + 4, q[0][1] + 1], [q[1][0], q[1][1] + 3]) + seg([q[3][0] + 1, q[3][1] - 3], [q[2][0] - 3, q[2][1] - 1]), '#444')
        }
        out += dash(S('M870 346L930 409', '#aaa'), '12 5')
        out += S(dots, '#111')
        // line supports
        for (const s of surfaces) for (const b of [0, -1]) for (const k of [0, 1, 2]) {
            const [x, y] = at(s.o, 0, b).map(Math.round), sx = x + 22 + 44 * k, sy = y - 5 - 20 * k
            out += P(`M${sx - 5} ${sy - 1}L${sx} ${sy - 4}L${sx + 5} ${sy - 1}L${sx + 3} ${sy + 3}L${sx - 3} ${sy + 4}Z`, '#28dc28', '#18b018', .5)
        }
        // dimension lines
        out += S('M589 384L635 432M719 516L763 562M849 264L1025 446', '#ff0000', 3)
        out += S('M645 439L712 509M922 312L993 386', '#1f497d', 3)

        const label = (x, y, t, color, bold) => `<rect x="${x - 2}" y="${y - 10}" width="${t.length * 6 + 4}" height="13" fill="#fff"/><text x="${x}" y="${y}" fill="${color}" font-size="${bold ? 11 : 10}"${bold ? ' font-weight="bold"' : ''}>${t}</text>`
        const put = (list, color, bold) => list.split(' ').forEach(e => { const [t, x, y] = e.split(','); out += label(+x, +y, t, color, bold) })
        put('PL1,572,530 PL2,837,411 PL3,1095,294', '#999')
        put('O1,602,502 O2,866,382', '#108080')
        put('1,511,423 4,469,440 17,568,426 7,570,473 6,629,488 8,590,526 5,650,542 3,692,554 1,522,574 2,671,611 1,632,629 1,775,303 12,733,321 15,833,353 28,881,358 13,892,368 6,856,407 11,914,422 9,786,454 10,934,491 1,897,509 14,1049,334 1,1041,183 21,998,201 25,1097,187 24,1118,287 22,1177,302 20,1220,314 19,1198,371 1,1162,389', '#00e4f4')
        put('1,422,454 4,555,394 7,607,448 8,554,472 17,589,510 6,677,522 5,624,546 3,729,577 2,597,637 12,821,275 9,688,335 16,873,329 18,819,353 15,942,402 14,889,426 11,995,456 10,862,517 22,1085,155 19,953,215 25,1138,209 26,1085,233 27,1120,270 23,1155,306 24,1209,282 21,1261,337 20,1127,397', '#800000', true)
        put('23,1097,234', '#00e4f4')
        for (const [t, x, y] of [['L17', 622, 404], ['L6', 689, 465], ['L3', 753, 535], ['L28', 885, 287], ['L13', 953, 337]]) out += `<text x="${x}" y="${y}" font-size="13" stroke="#000" stroke-width=".3">${t}</text>`
        for (const p of '418,459 551,400 604,454 550,478 585,515 675,527 620,551 726,581 593,641 684,339 817,279 869,334 816,358 939,407 886,431 991,462 858,522 949,219 1081,159 1134,214 1081,238 1115,274 1150,311 1204,287 1256,342 1123,402'.split(' ')) {
            const [x, y] = p.split(',')
            out += R(x - 1, y - 1, 3, 3, '#700000')
        }
        for (const [x, y] of [[376, 610], [593, 641]]) {
            out += S(`M${x} ${y}l-26 12`, '#00e000', 1.5) + P(`M${x - 34} ${y + 15}l8 -7l2 5z`, '#00a800')
            out += S(`M${x} ${y}v22`, '#0000f0', 1.5) + P(`M${x} ${y + 29}l-3 -8h6z`, '#0000a0')
            out += S(`M${x} ${y}l16 17`, '#f00000', 1.5) + P(`M${x + 22} ${y + 22}l-8 -3l4 -5z`, '#a00000')
            out += `<text x="${x - 45}" y="${y + 23}" font-size="10" fill="#00d000">Y</text><text x="${x - 3}" y="${y + 40}" font-size="10" fill="#0000e0">Z</text><text x="${x + 24}" y="${y + 33}" font-size="10" fill="#e00000">X</text>`
        }
        $('model').innerHTML = `<g transform="translate(-321 -109)" font-family="Liberation Sans, Arial, sans-serif">${out}</g>`

        // ---------- results table ----------
        const hd = 'h-[15px] leading-[14px] p-0 font-normal border border-[#6e6e6e] bg-[#e1e1e1]'
        const sb = 'h-4 leading-[15px] p-0 font-normal border border-[#8e8e8e] bg-[#f0f0f0]'
        $('thead').innerHTML = `<tr><td rowspan="2" class="border border-[#8e8e8e] bg-[#e1e1e1]"></td><th class="${hd} bg-[#0078d7]! text-white">A</th><th class="${hd}">B</th><th class="${hd}">C</th><th class="${hd}">D</th><td class="${sb} border-r-0"></td></tr>
            <tr><th class="${sb}">Označení</th><th class="${sb}">Hodnota</th><th class="${sb}">Jednotky</th><th class="${sb}">Komentář</th><td class="${sb} border-r-0"></td></tr>`
        const side = 'h-4 p-0 border border-[#6e6e6e] shadow-[inset_1px_1px_0_#fff]'
        const cell = 'h-4 p-0 leading-[15px] border border-[#a0a0a0] whitespace-pre'
        const data = [
            ['Součet zatížení ve směru X', '0.00', 'kN', ''],
            ['Součet podporových sil ve směru X', '0.00', 'kN', ''],
            ['Součet zatížení ve směru Y', '0.00', 'kN', ''],
            ['Součet podporových sil ve směru Y', '0.00', 'kN', ''],
            ['Součet zatížení ve směru Z', '717.00', 'kN', ''],
            ['Součet podporových sil ve směru Z', '717.00', 'kN', 'Odchylka:  0.00 %'],
            ['Výslednice reakcí okolo X', '-117.857', 'kNm', 'V těžišti modelu (X: -5.000, Y: -12.214, Z: 0.000 m)'],
            ['Výslednice reakcí okolo Y', '-300.000', 'kNm', 'V těžišti modelu'],
            ['Výslednice reakcí okolo Z', '0.000', 'kNm', 'V těžišti modelu'],
            ['Maximální posun ve směru X', '0.0', 'mm', ''],
        ]
        $('rows').innerHTML = `<tr><td class="${side} bg-[#0078d7]"></td><td colspan="4" class="h-4 p-0 leading-[15px] bg-white border border-[#a0a0a0] font-bold text-[13px]"><span class="flex items-center gap-[3px] pl-[2px] h-[15px] border border-dotted border-black"><svg class="w-[9px] h-[9px]" viewBox="0 0 9 9"><path d="M.5.5H8.500V8.500H.5ZM2 4.500H7" fill="none" stroke="#000"/></svg>ZS1</span></td><td class="${sb} border-r-0"></td></tr>`
            + data.map((r, i) => {
                const bg = [0, 1, 4, 5].includes(i) ? 'bg-[#f8faff]' : 'bg-white'
                return `<tr><td class="${side} bg-[#e1e1e1]"></td><td class="${cell} ${bg}"><span class="flex items-center pl-[7px] h-[15px]"><i class="h-[15px] w-[12px] border-l border-[#d4d4d4] flex items-center"><i class="w-full h-px bg-[#d4d4d4]"></i></i><span class="pl-[7px]">${r[0]}</span></span></td>
                    <td class="${cell} ${bg} text-right pr-1!">${r[1]}</td><td class="${cell} ${bg} pl-[3px]!">${r[2]}</td><td class="${cell} ${bg} pl-[3px]!">${r[3]}</td><td class="${sb} border-r-0"></td></tr>`
            }).join('')

        $('tabs').innerHTML = ['Výsledky - souhrn', 'Uzly - deformace', 'Linie - podporové síly', 'Plochy - lokální deformace', 'Plochy - tvar', 'Plochy - globální deformace', 'Plochy - základní vnitřní síly', 'Plochy - hlavní vnitřní síly']
            .map((t, i) => `<button class="h-[18px] px-[3px] whitespace-nowrap border-r border-b border-[#6e6e6e] rounded-b-sm ${i ? 'bg-[#e1e1e1]' : 'bg-white'}">${t}</button>`).join('')
        $('pager').innerHTML = [['M3.500 1V9M10 1L5 5L10 9Z', '#aaa'], ['M8 1L3 5L8 9Z', '#aaa'], ['M4 1L9 5L4 9Z', '#000'], ['M2 1L7 5L2 9ZM9 1V9', '#000']]
            .map(([d, c]) => `<button aria-label="Listovat" class="w-4 h-[17px] grid place-items-center border-r border-b border-[#999] bg-[#f0f0f0]"><svg class="w-3 h-[10px]" viewBox="0 0 12 10"><path d="${d}" fill="${c}" stroke="${c}"/></svg></button>`).join('')
        $('modes').innerHTML = [['UCHOP', 'w-[46px]'], ['RASTR', 'w-[41px]'], ['KARTEZ', 'w-[50px]'], ['OUCHOP', 'w-[55px]'], ['VLINIE', 'w-[41px]'], ['DXF', 'w-[28px]']]
            .map(([t, w]) => `<button class="${w} h-[19px] pl-[2px] text-left border border-t-black border-l-black border-r-white border-b-white">${t}</button>`).join('')
    </script>
</body>

</html>
